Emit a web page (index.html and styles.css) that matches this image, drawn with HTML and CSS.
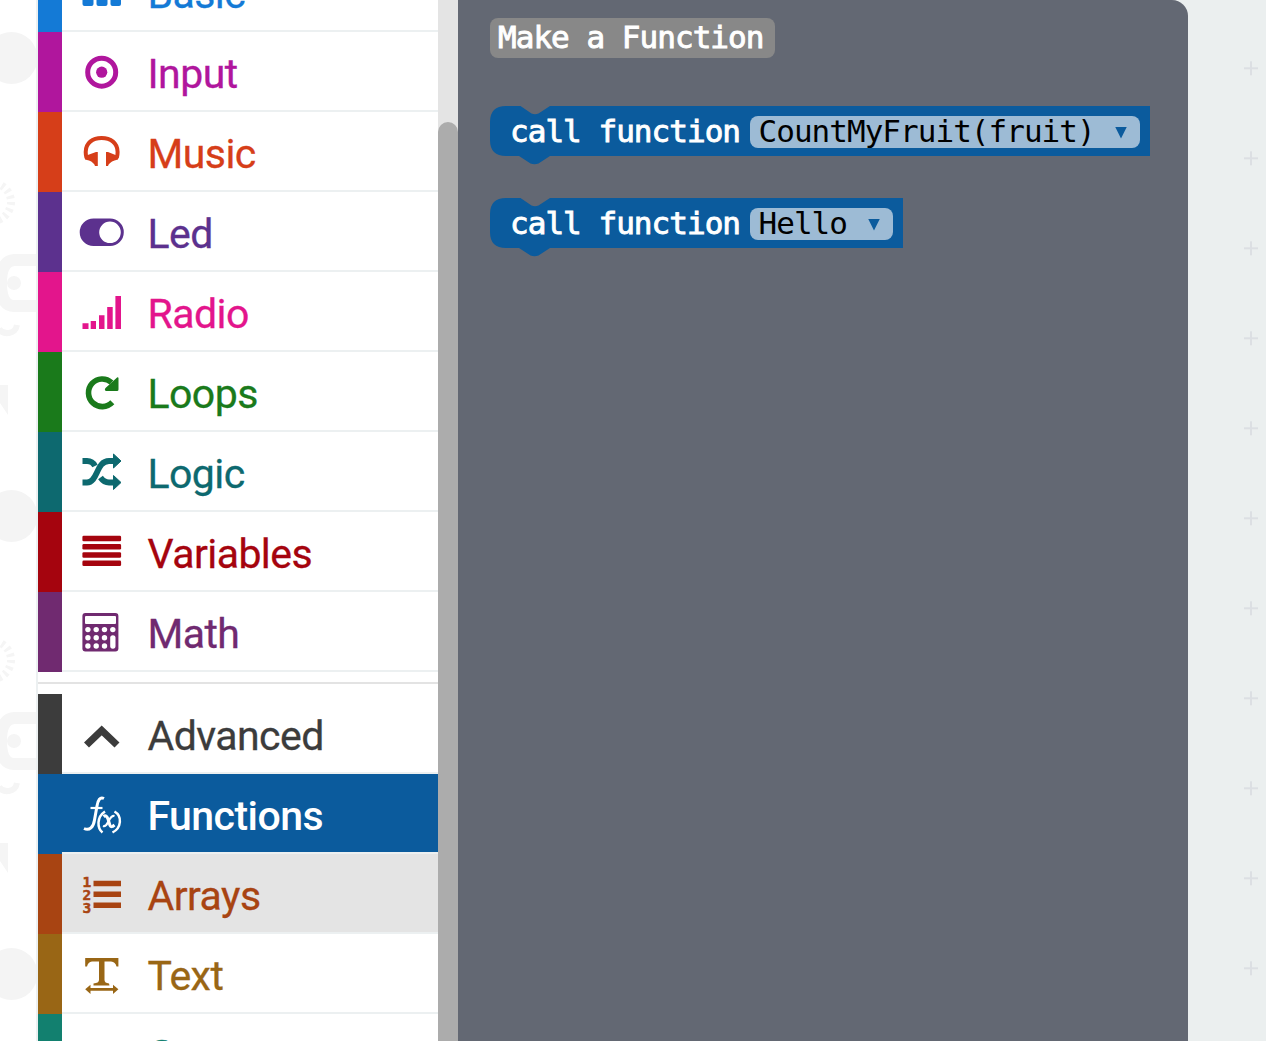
FILE: index.html
```html
<!DOCTYPE html>
<html lang="en">
<head>
<meta charset="utf-8">
<title>Blocks editor</title>
<link rel="stylesheet" href="styles.css">
</head>
<body>
<div class="editor">
  <svg class="backdrop" viewBox="0 0 36 1041" aria-hidden="true">
    <defs>
      <g id="pattern" fill="none" stroke="#f5f5f5">
        <circle cx="11.500" cy="58" r="26" fill="#f4f4f4" stroke="none"/>
        <circle cx="-8" cy="202" r="19" stroke-width="8" stroke-dasharray="3 3.600"/>
        <path d="M38 260H14Q1 261 1 283Q1 306 14 306H38" stroke-width="12"/>
        <circle cx="14" cy="283" r="7" fill="#f5f5f5" stroke="none"/>
        <path d="M-1 329C3 335 15 335 17 325" stroke-width="6"/>
        <path d="M0 385H8V415L0 403Z" fill="#f5f5f5" stroke="none"/>
      </g>
    </defs>
    <use href="#pattern"/>
    <use href="#pattern" y="458"/>
    <use href="#pattern" y="916"/>
  </svg>
  <nav class="toolbox">
    <div class="row basic"><span class="icon"><svg viewBox="0 0 60 80"><rect x="20.500" y="40" width="11" height="14" rx="2"/><rect x="34.500" y="40" width="11" height="14" rx="2"/><rect x="48.500" y="40" width="10.500" height="14" rx="2"/></svg></span><span class="label">Basic</span></div>
    <div class="row input"><span class="icon"><svg viewBox="0 0 60 80"><circle cx="39.700" cy="40.200" r="14" fill="none" stroke="currentColor" stroke-width="5"/><circle cx="39.700" cy="40.200" r="5.600"/></svg></span><span class="label">Input</span></div>
    <div class="row music"><span class="icon"><svg viewBox="0 0 60 80"><path d="M24.500 46Q23.700 43 23.700 40C23.700 31 30.500 26 39.600 26S55.600 31 55.600 40Q55.600 43 54.800 46" fill="none" stroke="currentColor" stroke-width="4"/><path d="M35.800 40V54H33Q32 50.500 27 48.500L23 47.500V44L34 40ZM44 40V54H46Q47 50.500 52.500 48.500L56 47.500V44L46 40Z"/></svg></span><span class="label">Music</span></div>
    <div class="row led"><span class="icon"><svg viewBox="0 0 60 80"><path fill-rule="evenodd" d="M31.500 26.500H48a13.800 13.800 0 0 1 0 27.600H31.500a13.800 13.800 0 0 1 0-27.600ZM48 29.500a10.800 10.800 0 1 0 0 21.600a10.800 10.800 0 0 0 0-21.600Z"/></svg></span><span class="label">Led</span></div>
    <div class="row radio"><span class="icon"><svg viewBox="0 0 60 80"><path d="M20.500 51.200h6V57h-6zM28.700 49H34v8h-5.300zM37 43.200h5.500V57H37zM45.200 35h5.500v22h-5.500zM53.400 24H59v33h-5.600z"/></svg></span><span class="label">Radio</span></div>
    <div class="row loops"><span class="icon"><svg viewBox="0 0 60 80"><path d="M50.300 50.300A13.800 13.800 0 1 1 49.500 30.500" fill="none" stroke="currentColor" stroke-width="5.600"/><path d="M56.500 26V37.500Q56.500 39 55 39H44Q42 38 43.500 36L54 26.500Q56 24.500 56.500 26Z"/></svg></span><span class="label">Loops</span></div>
    <div class="row logic"><span class="icon"><svg viewBox="0 0 60 80"><g fill="none" stroke="currentColor" stroke-width="5.800"><path d="M20.500 50.500H25C36 50.500 34 29 47 29H52M20.500 29H25Q30.500 29 33 34M38.500 45.500Q42 50.500 47 50.500H52"/></g><path d="M51.500 22L59 29L51.500 36ZM51.500 43.500L59 50.500L51.500 57.500Z" stroke="currentColor"/></svg></span><span class="label">Logic</span></div>
    <div class="row variables"><span class="icon"><svg viewBox="0 0 60 80"><rect x="20.400" y="23.800" width="38.700" height="5.400" rx="1.300"/><rect x="20.400" y="32.100" width="38.700" height="5.400" rx="1.300"/><rect x="20.400" y="40.300" width="38.700" height="5.400" rx="1.300"/><rect x="20.400" y="48.600" width="38.700" height="5.400" rx="1.300"/></svg></span><span class="label">Variables</span></div>
    <div class="row math"><span class="icon"><svg viewBox="0 0 60 80"><rect x="20.400" y="21" width="36" height="38.500" rx="3"/><g fill="#fff"><rect x="23" y="24" width="31" height="8" rx="1"/><circle cx="25.900" cy="37.600" r="2.700"/><circle cx="34.200" cy="37.600" r="2.700"/><circle cx="42.500" cy="37.600" r="2.700"/><circle cx="50.800" cy="37.600" r="2.700"/><circle cx="25.900" cy="45.800" r="2.700"/><circle cx="34.200" cy="45.800" r="2.700"/><circle cx="42.500" cy="45.800" r="2.700"/><circle cx="25.900" cy="54" r="2.700"/><circle cx="34.200" cy="54" r="2.700"/><circle cx="42.500" cy="54" r="2.700"/><rect x="48.200" y="43.200" width="5.300" height="13.500" rx="2.600"/></g></svg></span><span class="label">Math</span></div>
    <div class="divider"></div>
    <div class="row advanced"><span class="icon"><svg viewBox="0 0 60 80"><path d="M24.500 51L39.700 36.500L55 51" fill="none" stroke="currentColor" stroke-width="7.200"/></svg></span><span class="label">Advanced</span></div>
    <div class="row functions"><span class="icon"><svg viewBox="0 0 60 80" fill="none" stroke="currentColor"><path d="M42 24.500C38 22.500 36 26 35 32L32.500 46C31.500 53 27.500 57 22 54.500" stroke-width="3"/><path d="M28.500 34H40.500" stroke-width="2.200"/><path d="M43 37.500C34.500 43 35 54 40.500 58.500M52.500 37.500C60.500 42 59.500 54 50.500 58.500" stroke-width="2.500"/><path d="M41.500 42.500Q44.500 40.500 46 45L48 51.500Q49 54 52.500 51" stroke-width="3"/><path d="M52.500 42C49 41 47.500 46 45.500 49Q43.500 53 41 52" stroke-width="2.200"/></svg></span><span class="label">Functions</span></div>
    <div class="row arrays"><span class="icon"><svg viewBox="0 0 60 80"><path d="M31.500 26.800H59v5.500H31.500zM31.500 37.500H59V43H31.500zM31.500 48.500H59V54H31.500z"/><g class="digits"><text x="20.500" y="32.500">1</text><text x="20.500" y="46">2</text><text x="20.500" y="59.300">3</text></g></svg></span><span class="label">Arrays</span></div>
    <div class="row text"><span class="icon"><svg viewBox="0 0 60 80"><path d="M23.200 24H56.400V32.500H54.500Q53.500 28 49 27.500H42.500V46Q42.500 49 47 49.500L47.500 51.500H31.500V49.500Q37 49 37 46V27.500H30Q26 28 25 32.500H23.200ZM23.200 55.300L28.500 50.700V54H51V50.700L56.400 55.300L51 60V56.800H28.500V60Z"/></svg></span><span class="label">Text</span></div>
    <div class="row game"><span class="icon"></span><span class="label">Game</span></div>
  </nav>
  <div class="scrollbar"><div class="thumb"></div></div>
  <main class="workspace">
    <svg class="grid" width="78" height="1041" aria-hidden="true">
      <defs><pattern id="cross" width="90" height="90" patternUnits="userSpaceOnUse" y="23.300"><path d="M56 45H70M63 38V52" stroke="#dcdfe3" stroke-width="2"/></pattern></defs>
      <rect width="78" height="1041" fill="url(#cross)"/>
    </svg>
    <section class="flyout">
      <button class="make">Make a Function</button>
      <div class="block count">
        <svg class="shape" viewBox="0 0 660 60"><path d="M16 0H30.500L41.500 7.500Q45 9 48.500 7.500L60 0H660V50H60L48.500 57.500Q44.500 59 40.500 57.500L29 50H16Q0 50 0 34V16Q0 0 16 0Z"/></svg>
        <span class="call">call function</span><span class="field"><span>CountMyFruit(fruit)</span><i class="caret"></i></span>
      </div>
      <div class="block hello">
        <svg class="shape" viewBox="0 0 413 60"><path d="M16 0H30.500L41.500 7.500Q45 9 48.500 7.500L60 0H413V50H60L48.500 57.500Q44.500 59 40.500 57.500L29 50H16Q0 50 0 34V16Q0 0 16 0Z"/></svg>
        <span class="call">call function</span><span class="field"><span>Hello</span><i class="caret"></i></span>
      </div>
    </section>
  </main>
</div>
</body>
</html>
```
FILE: styles.css
```css
* { box-sizing: border-box; }
body { margin: 0; overflow: hidden; background: #fff; }
.editor { display: flex; width: 1266px; height: 1041px; overflow: hidden; }
.backdrop { width: 38px; height: 1041px; flex: none; border-right: 2px solid #ecf0f1; }
.toolbox { width: 400px; flex: none; margin-top: -48px; font-family: Roboto, sans-serif; font-size: 41px; letter-spacing: -.55px; }
.row { display: flex; height: 80px; color: var(--c); border-left: 24px solid var(--c); background: linear-gradient(#ecf0f1, #ecf0f1) bottom / 100% 2px no-repeat; }
.icon { width: 60px; height: 80px; flex: none; }
.icon svg { display: block; width: 60px; height: 80px; fill: currentColor; overflow: visible; }
.functions .icon svg { fill: none; }
.label { margin-left: 25.500px; line-height: 84px; height: 80px; white-space: nowrap; -webkit-text-stroke: .3px; }
.digits { font: bold 14.500px "DejaVu Sans Mono", monospace; letter-spacing: 0; stroke: currentColor; stroke-width: .5px; }
.basic { --c: #147ad6; }
.input { --c: #b0169d; }
.music { --c: #d63e19; }
.led { --c: #5c318e; }
.radio { --c: #e3158c; }
.loops { --c: #1a7a1b; }
.logic { --c: #0d696f; }
.variables { --c: #a5040e; }
.math { --c: #702a70; }
.divider { height: 22px; padding-top: 10px; }
.divider::before { content: ""; display: block; height: 2px; background: #e3e3e3; }
.advanced { --c: #3c3c3c; }
.functions { --c: #0b5b9d; color: #fff; background-color: #0b5b9d; font-weight: 500; }
.functions .label { -webkit-text-stroke: 0; }
.arrays { --c: #a84412; background-color: #e4e4e4; }
.text { --c: #996615; }
.game { --c: #12806f; }
.game .label { line-height: 82px; }
.scrollbar { width: 20px; flex: none; background: #e4e4e4; padding-top: 122px; }
.thumb { height: 930px; border-radius: 10px; background: #acacac; }
.workspace { flex: 1; display: flex; flex-direction: row-reverse; background: #ebefef; }
.grid { flex: none; }
.flyout { width: 730px; padding: 18px 32px; background: #636873; border-top-right-radius: 16px; font-family: "DejaVu Sans Mono", monospace; font-size: 31px; letter-spacing: -.97px; }
.make { display: block; width: 285px; height: 40px; padding: 0 0 1px 8px; border: 0; border-radius: 8px; color: #fff; background: #888; font: inherit; letter-spacing: inherit; line-height: 39px; text-align: left; -webkit-text-stroke: .9px; white-space: nowrap; }
.block { position: relative; display: flex; align-items: center; height: 50px; margin-top: 48px; padding: 0 10px 0 20px; }
.count { width: 660px; }
.hello { width: 413px; margin-top: 42px; }
.shape { position: absolute; left: 0; top: 0; width: 100%; height: 60px; fill: #0b5b9d; }
.call { position: relative; width: 239.500px; flex: none; line-height: 48px; color: #fff; -webkit-text-stroke: .9px; white-space: nowrap; }
.field { position: relative; flex: 1; display: flex; justify-content: space-between; align-items: center; height: 32px; margin-top: 2px; padding: 0 13px 0 9px; border-radius: 8px; background: #9dbbd5; color: #000; line-height: 32px; }
.field span { margin-top: -3px; }
.caret { width: 12px; height: 12px; margin-top: 1px; background: #0b5b9d; clip-path: polygon(0 0, 100% 0, 50% 100%); }
```
